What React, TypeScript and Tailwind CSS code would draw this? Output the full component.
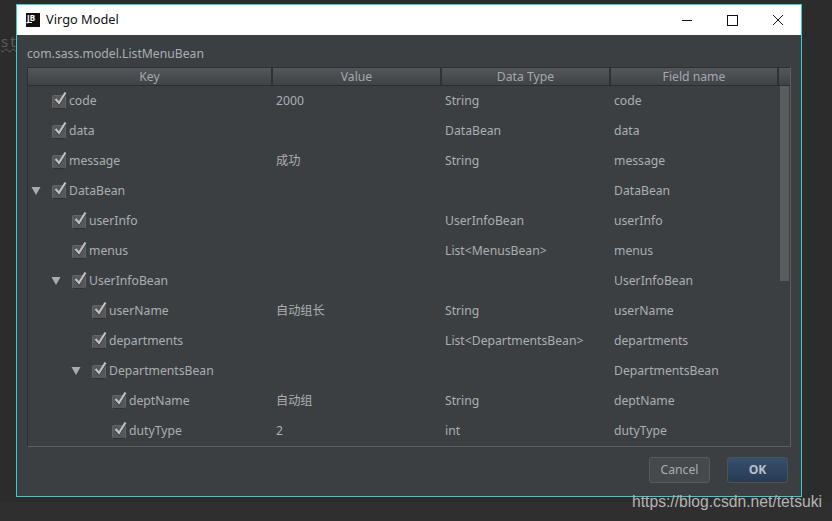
const font = { fontFamily: '"Noto Sans", "Noto Sans CJK SC", sans-serif' };

type Row = {
  level: number;
  name: string;
  value?: string;
  type?: string;
  field: string;
  open?: boolean;
};

const rows: Row[] = [
  { level: 0, name: 'code', value: '2000', type: 'String', field: 'code' },
  { level: 0, name: 'data', type: 'DataBean', field: 'data' },
  { level: 0, name: 'message', value: '成功', type: 'String', field: 'message' },
  { level: 0, name: 'DataBean', field: 'DataBean', open: true },
  { level: 1, name: 'userInfo', type: 'UserInfoBean', field: 'userInfo' },
  { level: 1, name: 'menus', type: 'List<MenusBean>', field: 'menus' },
  { level: 1, name: 'UserInfoBean', field: 'UserInfoBean', open: true },
  { level: 2, name: 'userName', value: '自动组长', type: 'String', field: 'userName' },
  { level: 2, name: 'departments', type: 'List<DepartmentsBean>', field: 'departments' },
  { level: 2, name: 'DepartmentsBean', field: 'DepartmentsBean', open: true },
  { level: 3, name: 'deptName', value: '自动组', type: 'String', field: 'deptName' },
  { level: 3, name: 'dutyType', value: '2', type: 'int', field: 'dutyType' },
];

const Check = () => (
  <span className="relative block w-[14px] h-[14px] mt-[1px] shrink-0 rounded-[2px] bg-[#555758] border border-[#626465] border-b-[#2f3132]">
    <svg width="16" height="16" viewBox="0 0 16 16" className="absolute left-[-1px] top-[-5px]">
      <path d="M3.5 9.5 L7 13.5 L13.5 3" fill="none" stroke="#2e3031" strokeWidth="1.6" />
      <path d="M3.5 8 L7 12 L13.5 1.5" fill="none" stroke="#bfc1c2" strokeWidth="2.2" />
    </svg>
  </span>
);

const Arrow = () => (
  <svg width="10" height="8" viewBox="0 0 10 8" className="shrink-0">
    <path d="M0.5 0 H9.5 L5 8 Z" fill="#a9adaf" />
  </svg>
);

const HeaderCell = ({ label, className }: { label: string; className: string }) => (
  <div className={`flex items-center justify-center h-full pt-[1px] border-r-2 border-r-[#2f3132] text-[#a2a9ac] ${className}`}>
    {label}
  </div>
);

const TreeCell = ({ row }: { row: Row }) => (
  <div className="w-[244px] h-full flex items-center relative" style={{ paddingLeft: 24 + row.level * 20 }}>
    {row.open && (
      <span className="absolute top-[11px]" style={{ left: 3 + row.level * 20 }}>
        <Arrow />
      </span>
    )}
    <Check />
    <span className="ml-[3px]">{row.name}</span>
  </div>
);

const App = () => {
  return (
    <div style={font} className="w-[832px] h-[521px] overflow-hidden bg-[#2c2c2c] flex flex-col text-[12.2px] relative">
      <div className="flex flex-1 min-h-0">
        <div className="w-[16px] pt-[30px] pl-[1px] text-[15px] tracking-[2px] text-[#5b5d5e] whitespace-nowrap">
          <span className="underline decoration-wavy decoration-[#5b5d5e] decoration-[1px]">st</span>
        </div>
        <div className="w-[786px] h-[493px] mt-[4px] border border-[#33d2d2] flex flex-col">
          <div className="h-[30px] bg-white flex items-center shrink-0">
            <div className="ml-[9px] w-[14px] h-[14px] bg-[#111] text-white text-[8px] font-bold leading-[9px] pl-[1px]">
              JB
              <div className="w-[5px] h-[1px] bg-white" />
            </div>
            <span className="ml-[6px] text-[12.8px] text-[#111]">Virgo Model</span>
            <div className="ml-auto flex items-center text-black">
              <svg width="12" height="12" viewBox="0 0 12 12" className="mr-[33px]">
                <path d="M1 6.5 H11" stroke="#111" strokeWidth="1" />
              </svg>
              <svg width="12" height="12" viewBox="0 0 12 12" className="mr-[34px]">
                <rect x="1.5" y="1.5" width="10" height="10" fill="none" stroke="#111" strokeWidth="1" />
              </svg>
              <svg width="12" height="12" viewBox="0 0 12 12" className="mr-[17px]">
                <path d="M1 1 L11 11 M11 1 L1 11" stroke="#111" strokeWidth="1" />
              </svg>
            </div>
          </div>
          <div className="flex-1 min-h-0 bg-[#3c3f41] text-[#a9b0b3] flex flex-col px-[10px]">
            <div className="h-[32px] pt-[10px] leading-[18px] shrink-0 text-[#a9b0b3]">com.sass.model.ListMenuBean</div>
            <div className="h-[380px] shrink-0 border border-[#2d2f30] border-b-[#5c5f60] border-r-[#5c5f60] flex flex-col overflow-hidden">
              <div className="flex h-[18px] shrink-0 bg-gradient-to-b from-[#53565a] to-[#404346] border-b border-b-[#2d2f30]">
                <HeaderCell label="Key" className="w-[245px]" />
                <HeaderCell label="Value" className="w-[169px]" />
                <HeaderCell label="Data Type" className="w-[169px]" />
                <HeaderCell label="Field name" className="w-[168px]" />
              </div>
              <div className="flex flex-1 min-h-0">
                <div className="flex-1 min-w-0">
                  {rows.map((row) => (
                    <div key={row.name} className="flex h-[30px] items-center">
                      <TreeCell row={row} />
                      <div className="w-[169px] pl-[4px]">{row.value}</div>
                      <div className="w-[169px] pl-[4px] whitespace-nowrap">{row.type}</div>
                      <div className="w-[169px] pl-[4px]">{row.field}</div>
                    </div>
                  ))}
                </div>
                <div className="w-[11px] shrink-0 pl-[1px] pr-[1px]">
                  <div className="h-[195px] bg-[#595c5d]" />
                </div>
              </div>
            </div>
            <div className="flex justify-end gap-[17px] pt-[10px] pr-[3px]">
              <div className="w-[61px] h-[26px] rounded-[3px] border border-[#57595a] bg-[#46494b] flex items-center justify-center text-[#a9adaf]">Cancel</div>
              <div className="w-[61px] h-[26px] rounded-[3px] border border-[#4d5355] bg-gradient-to-b from-[#35506f] to-[#283b54] flex items-center justify-center font-bold text-[#b9c0c5]">OK</div>
            </div>
          </div>
        </div>
      </div>
      <div className="h-[19px] shrink-0 bg-[#2f2f2f]" />
      <div className="absolute left-[632px] top-[490px] text-[15.7px] text-[#b4b4b4] whitespace-nowrap" style={{ fontFamily: '"Liberation Sans", sans-serif' }}>
        https://blog.csdn.net/tetsuki
      </div>
    </div>
  );
};

export default App;
